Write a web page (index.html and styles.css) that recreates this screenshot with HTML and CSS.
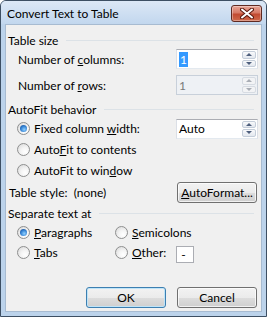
FILE: index.html
```html
<!DOCTYPE html>
<html lang="en">
<head>
    <meta charset="UTF-8">
    <meta name="viewport" content="width=device-width, initial-scale=1.0">
    <title>Convert Text to Table</title>
    <link rel="stylesheet" href="styles.css">
</head>
<body>
    <div class="dialog">
        <div class="titlebar">
            <span class="title">Convert Text to Table</span>
            <div class="close-btn">
                <svg width="14" height="11" viewBox="0 0 14 11">
                    <path d="M2 1.5 L12 9.5 M12 1.5 L2 9.5" stroke="#5b1a10" stroke-width="4" stroke-linecap="round"/>
                    <path d="M2 1.5 L12 9.5 M12 1.5 L2 9.5" stroke="#ffffff" stroke-width="2" stroke-linecap="round"/>
                </svg>
            </div>
        </div>

        <div class="panel">
            <!-- Table size -->
            <div class="group-head"><span>Table size</span><div class="rule"></div></div>
            <div class="field-row">
                <span class="label">Number of <u>c</u>olumns:</span>
                <div class="spinner">
                    <div class="spin-value"><span class="selected">1</span></div>
                    <div class="spin-arrows">
                        <div class="arrow up"></div>
                        <div class="arrow down"></div>
                    </div>
                </div>
            </div>
            <div class="field-row rows-row">
                <span class="label">Number of <u>r</u>ows:</span>
                <div class="spinner disabled">
                    <div class="spin-value">1</div>
                    <div class="spin-arrows">
                        <div class="arrow up"></div>
                        <div class="arrow down"></div>
                    </div>
                </div>
            </div>

            <!-- AutoFit behavior -->
            <div class="group-head autofit-head"><span>AutoFit behavior</span><div class="rule"></div></div>
            <div class="radio-row">
                <span class="radio checked"></span>
                <span class="radio-text">Fixed column <u>w</u>idth:</span>
                <div class="spinner">
                    <div class="spin-value">Auto</div>
                    <div class="spin-arrows">
                        <div class="arrow up"></div>
                        <div class="arrow down"></div>
                    </div>
                </div>
            </div>
            <div class="radio-row">
                <span class="radio"></span>
                <span class="radio-text">Auto<u>F</u>it to contents</span>
            </div>
            <div class="radio-row">
                <span class="radio"></span>
                <span class="radio-text">AutoFit to win<u>d</u>ow</span>
            </div>

            <div class="style-row">
                <span class="style-label">Table style:&nbsp; (none)</span>
                <div class="btn format-btn"><u>A</u>utoFormat...</div>
            </div>

            <!-- Separate text at -->
            <div class="group-head sep-head"><span>Separate text at</span><div class="rule"></div></div>
            <div class="sep-grid">
                <div class="sep-cell">
                    <span class="radio checked"></span>
                    <span class="radio-text"><u>P</u>aragraphs</span>
                </div>
                <div class="sep-cell">
                    <span class="radio"></span>
                    <span class="radio-text"><u>S</u>emicolons</span>
                </div>
                <div class="sep-cell">
                    <span class="radio"></span>
                    <span class="radio-text"><u>T</u>abs</span>
                </div>
                <div class="sep-cell">
                    <span class="radio"></span>
                    <span class="radio-text other-text"><u>O</u>ther:</span>
                    <div class="other-box">-</div>
                </div>
            </div>

            <div class="footer">
                <div class="btn default-btn">OK</div>
                <div class="btn">Cancel</div>
            </div>
        </div>
    </div>
</body>
</html>
```

FILE: styles.css
```css
body {
    margin: 0;
    padding: 0;
    font-family: Lato, "Noto Sans", sans-serif;
    font-size: 12px;
    color: #000;
    background: #fff;
}

.dialog {
    width: 267px;
    height: 317px;
    box-sizing: border-box;
    border: 1px solid #3d4f63;
    border-radius: 6px 6px 0 0;
    background: #bcd3eb;
    padding: 0 4px 4px 4px;
    display: flex;
    flex-direction: column;
}

.titlebar {
    height: 23px;
    flex-shrink: 0;
    display: flex;
    align-items: flex-start;
    justify-content: space-between;
    background: linear-gradient(#dce8f6, #c2d7ee);
    margin: 0 -4px;
    padding: 0 4px 0 6px;
    border-radius: 5px 5px 0 0;
}

.title {
    font-size: 12px;
    padding-top: 5px;
    color: #000;
}

.close-btn {
    width: 31px;
    height: 17px;
    margin-top: 4px;
    box-sizing: border-box;
    border: 1px solid #5f2a22;
    border-radius: 3px;
    background: linear-gradient(#e8a597 0%, #d77a66 45%, #c24a31 55%, #cf6a4c 100%);
    display: flex;
    align-items: center;
    justify-content: center;
    box-shadow: inset 0 0 0 1px rgba(255, 255, 255, 0.35);
}

.panel {
    flex: 1;
    background: #f0f0f0;
    border: 1px solid #a7bbd1;
    display: flex;
    flex-direction: column;
    padding: 6px 3px 3px 2px;
}

.group-head {
    height: 18px;
    display: flex;
    align-items: center;
    padding-right: 4px;
}

.group-head span {
    white-space: nowrap;
}

.rule {
    flex: 1;
    height: 1px;
    background: #dce2e7;
    margin-left: 8px;
    margin-top: 1px;
}

.field-row {
    height: 20px;
    display: flex;
    align-items: center;
    justify-content: space-between;
    padding-left: 10px;
}

.rows-row {
    margin-top: 6px;
}

.autofit-head {
    margin-top: 5px;
}

u {
    text-underline-offset: 1px;
}

.spinner {
    width: 82px;
    height: 20px;
    box-sizing: border-box;
    border: 1px solid #abadb3;
    border-left-color: #dbdfe6;
    border-right-color: #dbdfe6;
    border-bottom-color: #e3e9ef;
    background: #fff;
    display: flex;
    align-items: stretch;
    margin-left: auto;
}

.spin-value {
    flex: 1;
    display: flex;
    align-items: center;
    padding-left: 2px;
}

.selected {
    background: #3399ff;
    color: #fff;
    padding: 0 1px;
    line-height: 15px;
}

.spin-arrows {
    width: 14px;
    display: flex;
    flex-direction: column;
    gap: 1px;
    padding: 1px 1px 1px 0;
}

.arrow {
    flex: 1;
    border: 1px solid #c4cdd9;
    border-radius: 2px;
    background: linear-gradient(#f8f9fb, #e3e8ef);
    display: flex;
    align-items: center;
    justify-content: center;
}

.arrow::after {
    content: "";
    width: 0;
    height: 0;
    border-left: 3px solid transparent;
    border-right: 3px solid transparent;
}

.arrow.up::after {
    border-bottom: 3px solid #4e5f7d;
}

.arrow.down::after {
    border-top: 3px solid #4e5f7d;
}

.spinner.disabled {
    background: #eef1f5;
    border-color: #c8d0da;
    color: #7a7a7a;
}

.spinner.disabled .arrow {
    background: #f2f3f5;
    border-color: #d6dbe2;
}

.spinner.disabled .arrow.up::after {
    border-bottom-color: #a8adb5;
}

.spinner.disabled .arrow.down::after {
    border-top-color: #a8adb5;
}

.radio-row {
    height: 21px;
    display: flex;
    align-items: center;
    padding-left: 9px;
}

.radio {
    width: 13px;
    height: 13px;
    box-sizing: border-box;
    border-radius: 50%;
    border: 1px solid #8e8f8f;
    background: radial-gradient(circle at 65% 70%, #ffffff 0%, #f4f4f4 40%, #d6d6d6 100%);
    display: inline-flex;
    align-items: center;
    justify-content: center;
    flex-shrink: 0;
}

.radio.checked::after {
    content: "";
    width: 7px;
    height: 7px;
    border-radius: 50%;
    background: radial-gradient(circle at 60% 65%, #8fd0ff 0%, #2f7dd0 55%, #17407f 100%);
}

.radio-text {
    margin-left: 4px;
    white-space: nowrap;
}

.style-row {
    height: 21px;
    margin-top: 1px;
    display: flex;
    align-items: center;
    justify-content: space-between;
    padding-right: 1px;
}

.style-label {
    padding-left: 1px;
}

.btn {
    width: 80px;
    height: 21px;
    box-sizing: border-box;
    border: 1px solid #707070;
    border-radius: 3px;
    background: linear-gradient(#f2f2f2 0%, #ebebeb 50%, #dddddd 51%, #cfcfcf 100%);
    box-shadow: inset 0 0 0 1px rgba(255, 255, 255, 0.7);
    display: flex;
    align-items: center;
    justify-content: center;
    white-space: nowrap;
}

.sep-head {
    margin-top: 1px;
}

.sep-grid {
    display: grid;
    grid-template-columns: 98px auto;
    grid-auto-rows: 20px;
    padding-left: 9px;
}

.sep-cell {
    display: flex;
    align-items: center;
}

.other-text {
    margin-right: 10px;
}

.other-box {
    width: 18px;
    height: 17px;
    box-sizing: border-box;
    border: 1px solid #abadb3;
    background: #fff;
    display: flex;
    align-items: center;
    padding-left: 4px;
    margin-top: 5px;
}

.footer {
    margin-top: auto;
    display: flex;
    justify-content: flex-end;
    gap: 11px;
    padding-right: 1px;
    padding-bottom: 0;
}

.default-btn {
    border-color: #3c7fb1;
    box-shadow: inset 0 0 0 1px #bfe4f8;
}
```
